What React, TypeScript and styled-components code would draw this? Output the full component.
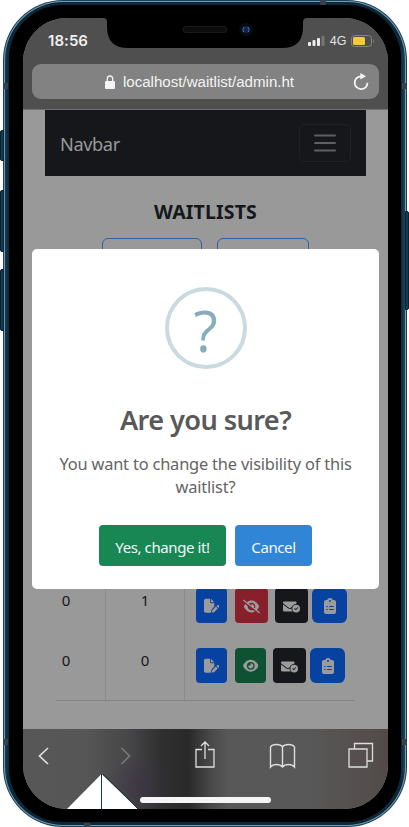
import React from "react";
import styled, { createGlobalStyle } from "styled-components";
import {
  FaFilePen,
  FaEyeSlash,
  FaEye,
  FaEnvelopeCircleCheck,
  FaClipboardList,
} from "react-icons/fa6";

const GlobalStyle = createGlobalStyle`
  *, *::before, *::after { box-sizing: border-box; }
  body { margin: 0; background: #fff; font-family: "Noto Sans", "Open Sans", sans-serif; }
  h1, h2, p { margin: 0; }
  button { font: inherit; padding: 0; margin: 0; }
`;

const Stage = styled.div`
  position: relative;
  width: 409px;
  height: 827px;
  overflow: hidden;
`;

const Phone = styled.div`
  width: 404px;
  height: 827px;
  margin-left: 3px;
  padding: 1px;
  border-radius: 60px;
  background: #1d4058;
`;

const Rim = styled.div`
  height: 100%;
  padding: 1px;
  border-radius: 59px;
  background: #6c9cb3;
`;

const Steel = styled.div`
  height: 100%;
  padding: 3px 4px;
  border-radius: 58px;
  background: linear-gradient(90deg, #173a50, #0e2739 4px, #0e2739 calc(100% - 4px), #1d4560);
`;

const Bezel = styled.div`
  height: 100%;
  padding: 13px 13px 12px 14px;
  border-radius: 54px;
  background: #000;
`;

const Screen = styled.div`
  position: relative;
  display: flex;
  flex-direction: column;
  width: 365px;
  height: 791px;
  overflow: hidden;
  border-radius: 44px;
  background: #999;
`;

const SideKey = styled.div<{ $side: "left" | "right"; $top: number; $height: number }>`
  position: absolute;
  ${(p) => p.$side}: 0;
  top: ${(p) => p.$top}px;
  width: 4px;
  height: ${(p) => p.$height}px;
  background: #173a4c;
  border: 1px solid #0a2230;
  border-radius: ${(p) => (p.$side === "left" ? "2px 0 0 2px" : "0 2px 2px 0")};
`;

const Antenna = styled.div<{ $x: number; $y: number; $w: number; $h: number }>`
  position: absolute;
  left: ${(p) => p.$x}px;
  top: ${(p) => p.$y}px;
  width: ${(p) => p.$w}px;
  height: ${(p) => p.$h}px;
  background: #35424b;
`;

const BrowserTop = styled.header`
  flex: none;
  height: 91px;
  background: #4f4f4f;
  font-family: "Liberation Sans", Arial, sans-serif;
`;

const StatusBar = styled.div`
  display: flex;
  align-items: center;
  justify-content: space-between;
  height: 46px;
  padding: 0 14px 0 25px;
`;

const Clock = styled.span`
  color: #f1f1f1;
  font: 600 15px/18px Inter, sans-serif;
  letter-spacing: 0.05px;
`;

const Signals = styled.div`
  display: flex;
  align-items: center;
  gap: 4.5px;
  color: #e2e2e2;
  font-size: 12.5px;
  line-height: 14px;
`;

const Notch = styled.svg`
  position: absolute;
  top: 0;
  left: 80px;
`;

const AddressBar = styled.div`
  display: grid;
  grid-template-columns: 1fr 26px;
  align-items: center;
  height: 35px;
  margin: 0 9px;
  padding-left: 14px;
  border-radius: 9px;
  background: #828282;
`;

const Address = styled.div`
  display: flex;
  align-items: center;
  justify-content: center;
  gap: 8px;
  color: #f4f4f4;
  font-size: 15.1px;
  white-space: nowrap;
`;

const Page = styled.main`
  flex: none;
  height: 620px;
  padding: 0 22px;
  overflow: hidden;
  border-top: 1px solid #707070;
  background: #999;
`;

const Navbar = styled.nav`
  display: flex;
  align-items: center;
  justify-content: space-between;
  height: 66px;
  padding: 0 15px;
  background: #15171b;
`;

const Brand = styled.span`
  padding-top: 1px;
  color: #999;
  font-size: 18.2px;
  letter-spacing: -0.4px;
`;

const Toggler = styled.button`
  display: grid;
  place-items: center;
  width: 52px;
  height: 38px;
  border: 1px solid #1f2125;
  border-radius: 5px;
  background: transparent;
`;

const Heading = styled.h1`
  margin-top: 23px;
  text-align: center;
  color: #15181b;
  font-size: 19.5px;
  font-weight: 700;
  line-height: 26px;
  letter-spacing: 0.15px;
`;

const Filters = styled.div`
  display: flex;
  gap: 15px;
  margin: 13px 0 0 57px;
`;

const Filter = styled.div<{ $width: number }>`
  width: ${(p) => p.$width}px;
  height: 36px;
  border: 1px solid #315f9f;
  border-radius: 6px;
`;

const Table = styled.div`
  margin: 306px 11px 0;
  border-bottom: 1px solid #858687;
`;

const Row = styled.div`
  display: grid;
  grid-template-columns: 50px 79px 1fr;
  height: 60px;
`;

const Cell = styled.div`
  padding: 8px 0 0;
  border-right: 1px solid #898a8b;
  color: #15181b;
  font-size: 15px;
  line-height: 24px;
  text-align: center;

  &:first-child { padding-right: 29px; }
`;

const Actions = styled.div`
  display: flex;
  align-items: flex-start;
  padding: 8px 0 0 11px;
`;

const tones = { blue: "#0742a0", red: "#87202b", green: "#0f5233", dark: "#15171a" };

const Action = styled.button<{ $tone: keyof typeof tones; $width: number; $gap?: number }>`
  display: grid;
  flex: none;
  place-items: center;
  width: ${(p) => p.$width}px;
  height: 35px;
  margin-left: ${(p) => p.$gap ?? 0}px;
  padding-top: 1px;
  border: 0;
  border-radius: ${(p) => (p.$width === 35 ? 6 : 4)}px;
  background: ${(p) => tones[p.$tone]};
  color: #9c9c9c;
`;

const Dialog = styled.section`
  position: absolute;
  top: 231px;
  left: 9px;
  display: flex;
  flex-direction: column;
  align-items: center;
  width: 347px;
  height: 340px;
  padding-top: 38px;
  border-radius: 5px;
  background: #fff;
  text-align: center;
`;

const QuestionRing = styled.div`
  display: flex;
  align-items: center;
  justify-content: center;
  width: 82px;
  height: 82px;
  border: 4px solid #c9dae1;
  border-radius: 50%;
  color: #87adbd;
  font-family: "Open Sans", "Noto Sans", sans-serif;
  font-size: 56px;
  line-height: 74px;
  padding-top: 3px;
`;

const Title = styled.h2`
  margin-top: 34px;
  color: #595959;
  font-size: 27.2px;
  font-weight: 600;
  line-height: 34px;
  letter-spacing: -0.6px;
`;

const Message = styled.p`
  margin-top: 15px;
  color: #646464;
  font-size: 16.4px;
  line-height: 23px;
  letter-spacing: -0.18px;
  white-space: nowrap;
`;

const Choices = styled.div`
  display: flex;
  gap: 9px;
  margin-top: 27px;
`;

const Choice = styled.button<{ $primary?: boolean }>`
  width: ${(p) => (p.$primary ? 127 : 77)}px;
  height: 41px;
  padding-top: 2px;
  border: 0;
  border-radius: 4px;
  background: ${(p) => (p.$primary ? "#198754" : "#3085d6")};
  color: #f3f8fa;
  font-size: 15px;
  letter-spacing: -0.4px;
  white-space: nowrap;
`;

const BrowserBottom = styled.footer`
  display: flex;
  flex: none;
  flex-direction: column;
  justify-content: space-between;
  height: 80px;
  padding: 12px 14px 6px 15px;
  background:
    radial-gradient(ellipse 34px 30px at 116px 56px, #3b304599 0%, #3b304500 100%),
    linear-gradient(90deg, #585757 0, #565656 65px, #464547 108px, #303030 138px, #292929 165px, #494949 188px, #585858 205px, #585858 285px, #55504f 330px, #514a49 100%);
`;

const Tools = styled.div`
  display: grid;
  grid-template-columns: 82px 74px 75px 78px 27px;
  color: #dedede;
`;

const HomeBar = styled.div`
  width: 131px;
  height: 6px;
  margin-left: 102px;
  border-radius: 3px;
  background: #f5f5f5;
`;

const Wedge = styled.svg`
  position: absolute;
  left: 67px;
  top: 773px;
`;

const Stroke = { fill: "none", stroke: "currentColor" };

export default function App() {
  return (
    <Stage>
      <GlobalStyle />
      <SideKey $side="left" $top={130} $height={31} />
      <SideKey $side="left" $top={190} $height={62} />
      <SideKey $side="left" $top={269} $height={62} />
      <SideKey $side="right" $top={211} $height={99} />
      <Phone>
        <Rim>
          <Steel>
            <Bezel>
              <Screen>
                <BrowserTop>
                  <StatusBar>
                    <Clock>18:56</Clock>
                    <Signals>
                      <svg width="17" height="10">
                        <g fill="#ededed">
                          <rect x="0" y="6" width="3" height="4" rx="1" />
                          <rect x="4.5" y="4" width="3" height="6" rx="1" />
                          <rect x="9" y="2" width="3" height="8" rx="1" />
                          <rect x="13.500" y="0" width="3" height="10" rx="1" fill="#777" />
                        </g>
                      </svg>
                      <span>4G</span>
                      <svg width="23" height="12">
                        <rect x=".5" y=".5" width="20" height="11" rx="3" fill="none" stroke="#858585" />
                        <rect x="2" y="2" width="12" height="8" rx="1.5" fill="#f3ca3e" />
                        <path d="M22 4q1.5 2 0 4z" fill="#858585" />
                      </svg>
                    </Signals>
                  </StatusBar>
                  <AddressBar>
                    <Address>
                      <svg width="10" height="14">
                        <path d="M2.3 7V4a2.7 3 0 0 1 5.4 0v3" fill="none" stroke="#f4f4f4" strokeWidth="1.3" />
                        <rect y="6" width="10" height="8" rx="1" fill="#f4f4f4" />
                      </svg>
                      <span>localhost/waitlist/admin.ht</span>
                    </Address>
                    <svg width="17" height="20" viewBox="0 0 17 20">
                      <path d="M8 4.3a6.4 6.4 0 1 0 6.5 6.5" fill="none" stroke="#f4f4f4" strokeWidth="1.8" />
                      <path d="M7.3 1v6.4L13 4.2z" fill="#f4f4f4" />
                    </svg>
                  </AddressBar>
                </BrowserTop>
                <Notch width="204" height="30" viewBox="0 0 204 30">
                  <path d="M0 0Q4 0 4 4V9Q4 30 25 30H179Q200 30 200 9V4Q200 0 204 0Z" fill="#000" />
                  <rect x="80" y="8.5" width="44" height="6" rx="3" fill="#0d0d0d" stroke="#1a1a1a" />
                  <circle cx="143" cy="11.5" r="6.7" fill="#0b0c10" />
                  <circle cx="143" cy="11.5" r="3.4" fill="#10264b" />
                  <path d="M141 9q-2 2-.5 5M145 9q2 2 .5 5" fill="none" stroke="#3974bd" />
                </Notch>
                <Page>
                  <Navbar>
                    <Brand>Navbar</Brand>
                    <Toggler aria-label="Toggle navigation">
                      <svg width="22" height="20">
                        <path d="M1 2.5H21M1 10H21M1 17.5H21" stroke="#5f6062" strokeWidth="2" strokeLinecap="round" />
                      </svg>
                    </Toggler>
                  </Navbar>
                  <Heading>WAITLISTS</Heading>
                  <Filters>
                    <Filter $width={100} />
                    <Filter $width={92} />
                  </Filters>
                  <Table>
                    <Row>
                      <Cell>0</Cell>
                      <Cell>1</Cell>
                      <Actions>
                        <Action $tone="blue" $width={31}><FaFilePen size={15.5} /></Action>
                        <Action $tone="red" $width={33} $gap={8}><FaEyeSlash size={17} /></Action>
                        <Action $tone="dark" $width={33} $gap={7}><FaEnvelopeCircleCheck size={17} /></Action>
                        <Action $tone="blue" $width={35} $gap={4}><FaClipboardList size={16} /></Action>
                      </Actions>
                    </Row>
                    <Row>
                      <Cell>0</Cell>
                      <Cell>0</Cell>
                      <Actions>
                        <Action $tone="blue" $width={31}><FaFilePen size={15.5} /></Action>
                        <Action $tone="green" $width={31} $gap={8}><FaEye size={15.5} /></Action>
                        <Action $tone="dark" $width={33} $gap={7}><FaEnvelopeCircleCheck size={17} /></Action>
                        <Action $tone="blue" $width={35} $gap={4}><FaClipboardList size={16} /></Action>
                      </Actions>
                    </Row>
                  </Table>
                </Page>
                <BrowserBottom>
                  <Tools>
                    <svg width="12" height="28"><path d="M10 7L1.500 15l8.500 8" {...Stroke} strokeWidth="1.7" /></svg>
                    <svg width="12" height="28" color="#7d7b7e"><path d="M1.500 7l8 8-8 8" {...Stroke} strokeWidth="1.5" /></svg>
                    <svg width="22" height="28">
                      <path d="M8 8.500H2V26H20V8.500H14M11 18V1M7 5l4-4 4 4" {...Stroke} strokeWidth="1.3" />
                    </svg>
                    <svg width="27" height="28">
                      <path d="M13.500 26V6Q12 3.500 7.500 3.500T1.500 6V26Q3.500 23.500 7.500 23.500T13.500 26Q15.500 23.500 19.500 23.500T25.500 26V6Q24 3.500 19.500 3.500T13.500 6" {...Stroke} strokeWidth="1.4" />
                    </svg>
                    <svg width="27" height="28">
                      <path d="M2 8H20V26H2zM7.500 8V2.500H25.500V20H20" {...Stroke} strokeWidth="1.3" />
                    </svg>
                  </Tools>
                  <HomeBar />
                </BrowserBottom>
                <Dialog role="dialog">
                  <QuestionRing>?</QuestionRing>
                  <Title>Are you sure?</Title>
                  <Message>
                    You want to change the visibility of this
                    <br />
                    waitlist?
                  </Message>
                  <Choices>
                    <Choice $primary>Yes, change it!</Choice>
                    <Choice>Cancel</Choice>
                  </Choices>
                </Dialog>
              </Screen>
            </Bezel>
          </Steel>
        </Rim>
      </Phone>
      <Wedge width="72" height="36">
        <path d="M34.500 1L71 36H0z" fill="#fff" />
        <path d="M34.500 1V36M36 1L71 36" stroke="#18383f" fill="none" />
      </Wedge>
      <Antenna $x={3} $y={83} $w={5} $h={6} />
      <Antenna $x={402} $y={83} $w={5} $h={6} />
      <Antenna $x={3} $y={739} $w={5} $h={6} />
      <Antenna $x={402} $y={739} $w={5} $h={6} />
      <Antenna $x={320} $y={0} $w={6} $h={5} />
      <Antenna $x={84} $y={823} $w={6} $h={4} />
    </Stage>
  );
}
